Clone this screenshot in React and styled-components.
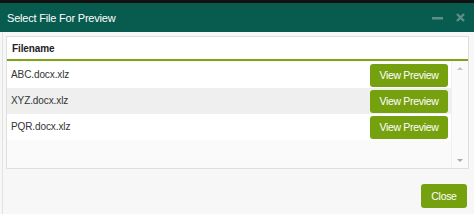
import React from "react";
import styled, { createGlobalStyle } from "styled-components";

const Global = createGlobalStyle`
  html, body { margin: 0; padding: 0; background: #f7f7f7; }
  body { font-family: "Liberation Sans", Arial, sans-serif; }
`;

const Modal = styled.div`
  width: 474px;
  height: 214px;
  display: flex;
  flex-direction: column;
  background: #f7f7f7;
  border-top: 3px solid #111;
  box-sizing: border-box;
`;

const Header = styled.div`
  height: 29px;
  background: #085c4f;
  display: flex;
  align-items: center;
  padding: 0 9px 0 7px;
  color: #fff;
  font-size: 11px;
`;

const Title = styled.div`
  flex: 1;
  letter-spacing: -0.2px;
`;

const HeadIcons = styled.div`
  display: flex;
  align-items: center;
  gap: 13px;
  color: #5d8f86;
`;

const Body = styled.div`
  flex: 1;
  display: flex;
  flex-direction: column;
  padding: 4px 5px 6px 3px;
  border-left: 1px solid #e2e2e2;
  margin-left: 2px;
`;

const Table = styled.div`
  border: 1px solid #dedede;
  background: #fafafa;
  height: 133px;
  display: flex;
  flex-direction: column;
  box-sizing: border-box;
`;

const HeadRow = styled.div`
  height: 22px;
  display: flex;
  align-items: center;
  padding-left: 5px;
  font-weight: bold;
  font-size: 10px;
  letter-spacing: -0.1px;
  color: #222;
  background: #fff;
  border-bottom: 2px solid #7ba31c;
`;

const Scroller = styled.div`
  flex: 1;
  display: flex;
`;

const Rows = styled.div`
  flex: 1;
  display: flex;
  flex-direction: column;
  padding-top: 1px;
`;

const Row = styled.div`
  height: 26px;
  display: flex;
  align-items: center;
  justify-content: space-between;
  padding: 0 3px 0 4px;
  background: ${(p) => (p.$alt ? "#efefef" : "#fff")};
  font-size: 10px;
  letter-spacing: -0.1px;
  color: #333;
`;

const FileName = styled.span`
  margin-top: -1px;
`;

const Button = styled.button`
  height: ${(p) => p.$h || 23}px;
  width: ${(p) => p.$w}px;
  padding: 0;
  border: none;
  border-radius: 3px;
  background: #76a10f;
  color: #fff;
  font-family: "Liberation Sans", Arial, sans-serif;
  font-size: 10.5px;
  letter-spacing: -0.3px;
  cursor: pointer;
`;

const ScrollBar = styled.div`
  width: 16px;
  display: flex;
  flex-direction: column;
  justify-content: space-between;
  align-items: center;
  padding: 6px 0 6px;
  background: #fafafa;
  border-left: 1px solid #f0f0f0;
`;

const Arrow = styled.div`
  width: 0;
  height: 0;
  border-left: 3px solid transparent;
  border-right: 3px solid transparent;
  ${(p) =>
    p.$down
      ? "border-top: 3px solid #a8a8a8;"
      : "border-bottom: 3px solid #c4c4c4;"}
`;

const Footer = styled.div`
  flex: 1;
  display: flex;
  justify-content: flex-end;
  align-items: flex-end;
  padding-right: 2px;
`;

const files = ["ABC.docx.xlz", "XYZ.docx.xlz", "PQR.docx.xlz"];

export default function App() {
  return (
    <>
      <Global />
      <Modal>
        <Header>
          <Title>Select File For Preview</Title>
          <HeadIcons>
            <svg width="11" height="10" viewBox="0 0 11 10">
              <rect x="0" y="4" width="11" height="2.5" fill="currentColor" />
            </svg>
            <svg width="9" height="9" viewBox="0 0 9 9">
              <path d="M1 1 L8 8 M8 1 L1 8" stroke="currentColor" strokeWidth="2.4" />
            </svg>
          </HeadIcons>
        </Header>
        <Body>
          <Table>
            <HeadRow>Filename</HeadRow>
            <Scroller>
              <Rows>
                {files.map((f, i) => (
                  <Row key={f} $alt={i === 1}>
                    <FileName>{f}</FileName>
                    <Button $w={78}>View Preview</Button>
                  </Row>
                ))}
              </Rows>
              <ScrollBar>
                <Arrow />
                <Arrow $down />
              </ScrollBar>
            </Scroller>
          </Table>
          <Footer>
            <Button $w={46} $h={24}>Close</Button>
          </Footer>
        </Body>
      </Modal>
    </>
  );
}
